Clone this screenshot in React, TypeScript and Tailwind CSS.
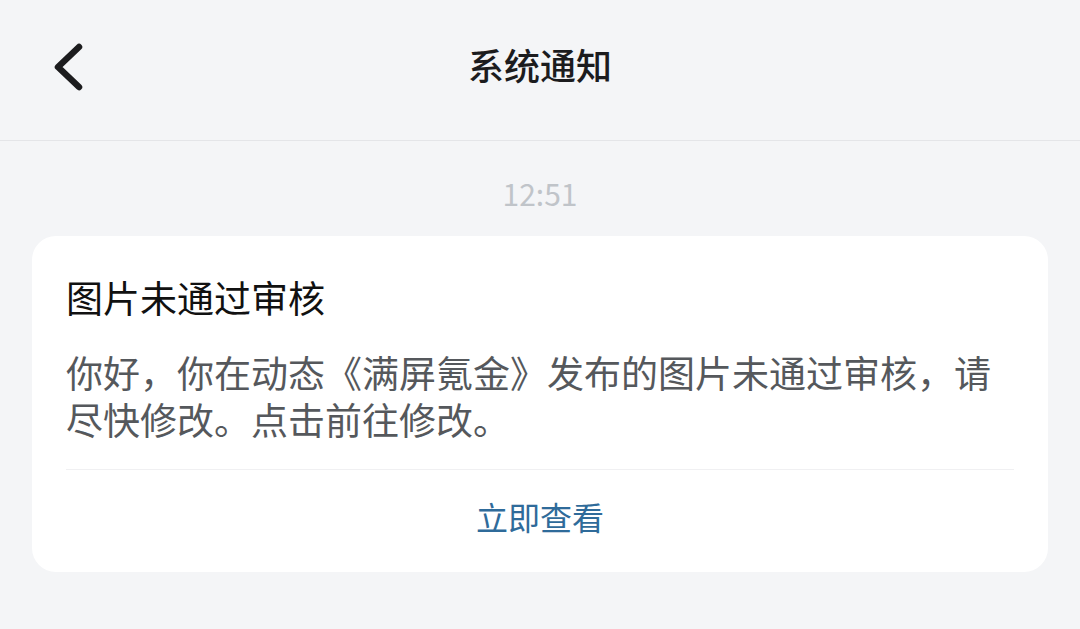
const FONT = "font-['Noto_Sans_CJK_SC','Noto_Sans',sans-serif]";

const BackIcon = () => (
  <svg width="40" height="50" viewBox="0 0 40 50" fill="none">
    <path
      d="M34 5 L13 25 L34 45"
      stroke="#1c1c1e"
      strokeWidth="6.5"
      strokeLinecap="round"
      strokeLinejoin="round"
    />
  </svg>
);

const NoticeCard = () => (
  <div className="mx-[32px] rounded-[24px] bg-white">
    <div className="px-[34px] pt-[39px]">
      <div className="text-[37px] leading-[44px] font-normal text-[#111111]">
        图片未通过审核
      </div>
      <p className="mt-[30px] text-[37px] leading-[47px] text-[#55585c]">
        你好，你在动态《满屏氪金》发布的图片未通过审核，请尽快修改。点击前往修改。
      </p>
      <div className="mt-[26px] h-px bg-[#f0f0f2]" />
    </div>
    <div className="flex justify-center pt-[26px] pb-[36px]">
      <span className="text-[32px] leading-[40px] text-[#2f6b9a]">立即查看</span>
    </div>
  </div>
);

export default function App() {
  return (
    <div className={`${FONT} min-h-[629px] w-full bg-[#f4f5f7]`}>
      <header className="relative flex h-[141px] items-center justify-center border-b border-[#e4e5e8] pb-[12px]">
        <div className="absolute left-[45px] top-[42px]">
          <BackIcon />
        </div>
        <h1 className="text-[36px] font-medium text-[#1c1c1e]">系统通知</h1>
      </header>
      <div className="pt-[34px] pb-[25px] text-center text-[30px] leading-[36px] text-[#c0c4c9]">
        12:51
      </div>
      <NoticeCard />
    </div>
  );
}
